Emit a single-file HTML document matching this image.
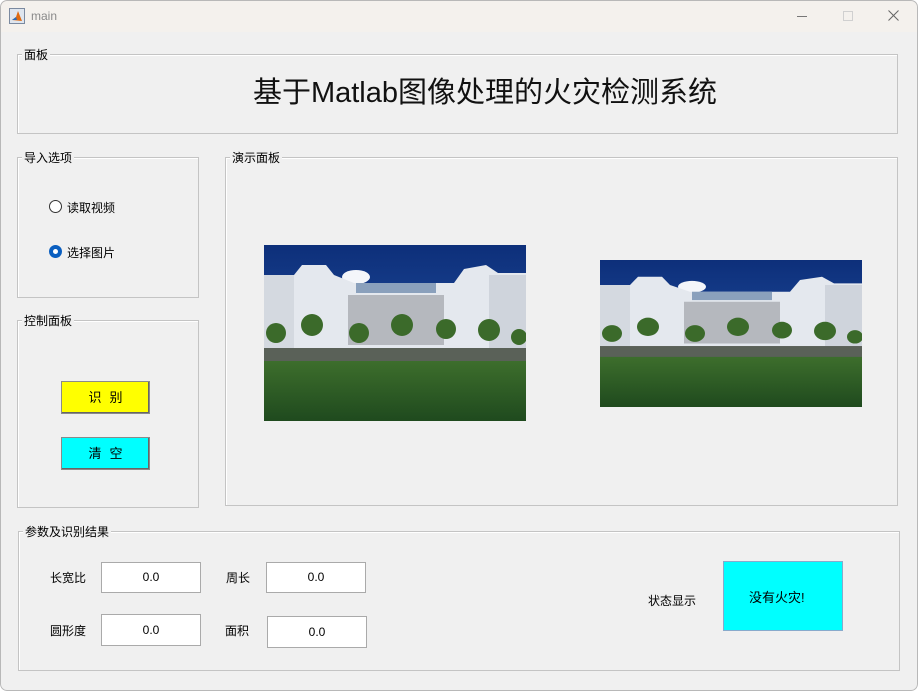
<!DOCTYPE html>
<html><head><meta charset="utf-8"><style>
body{margin:0;width:918px;height:691px;overflow:hidden;background:#fff;font-family:"Liberation Sans","Noto Sans CJK SC",sans-serif;font-size:12px;color:#000}
.win{position:absolute;left:0;top:0;width:918px;height:691px;border-radius:7px;background:#f0f0f0;overflow:hidden}
.bd{position:absolute;left:0;top:0;width:916px;height:689px;border:1px solid #b8b8b8;border-radius:7px}
.tb{position:absolute;left:0;top:0;width:918px;height:32px;background:#f4f1ed}
.a{position:absolute}
.g{position:absolute;border:1px solid #c4c4c4;box-shadow:inset 1px 1px 0 #fff}
.lb{position:absolute;background:#f0f0f0;padding:0 2px;font-size:12px;line-height:14px}
.btn{position:absolute;border:1px solid #8a8a8a;box-shadow:inset -1px -1px 0 #666;text-align:center;font-size:13px;line-height:32px;letter-spacing:8px;text-indent:8px}
.ed{position:absolute;background:#fff;border:1px solid #aaa;text-align:center;font-size:12px}
</style></head><body>
<div class="win">
<div class="tb"></div>
<svg class="a" style="left:9px;top:8px" width="16" height="16"><rect x="0.5" y="0.5" width="15" height="15" fill="#dfe6ef" stroke="#7b8aa0"/><path d="M3 12 L7 9 L9 3 L13 13 Z" fill="#e06a10"/><path d="M3 12 L7 9 L8 12Z" fill="#2a6bb8"/></svg>
<div class="a" style="left:31px;top:9px;color:#8a8a8a;font-size:12px">main</div>
<div class="a" style="left:797px;top:16px;width:10px;height:1px;background:#777"></div>
<div class="a" style="left:843px;top:11px;width:8px;height:8px;border:1px solid #d0d0d0"></div>
<svg class="a" style="left:888px;top:10px" width="11" height="11"><path d="M0.5 0.5 L10.5 10.5 M10.5 0.5 L0.5 10.5" stroke="#666" stroke-width="1"/></svg>

<div class="g" style="left:17px;top:54px;width:879px;height:78px"></div>
<div class="lb" style="left:22px;top:48px">面板</div>
<div class="a" style="left:0;width:970px;top:75px;text-align:center;font-size:29px;line-height:36px;color:#111">基于Matlab图像处理的火灾检测系统</div>

<div class="g" style="left:17px;top:157px;width:180px;height:139px"></div>
<div class="lb" style="left:22px;top:151px">导入选项</div>
<div class="a" style="left:49px;top:200px;width:11px;height:11px;border:1px solid #333;border-radius:50%;background:#fff"></div>
<div class="a" style="left:67px;top:199px">读取视频</div>
<div class="a" style="left:49px;top:245px;width:11px;height:11px;border:1px solid #0a5fc0;border-radius:50%;background:#0a5fc0"></div>
<div class="a" style="left:53px;top:249px;width:5px;height:5px;border-radius:50%;background:#fff"></div>
<div class="a" style="left:67px;top:244px">选择图片</div>

<div class="g" style="left:17px;top:320px;width:180px;height:186px"></div>
<div class="lb" style="left:22px;top:314px">控制面板</div>
<div class="btn" style="left:61px;top:381px;width:87px;height:31px;background:#ffff00;line-height:31px">识别</div>
<div class="btn" style="left:61px;top:437px;width:87px;height:31px;background:#00ffff;line-height:31px">清空</div>

<div class="g" style="left:225px;top:157px;width:671px;height:347px"></div>
<div class="lb" style="left:230px;top:151px">演示面板</div>

<svg class="a" style="left:264px;top:245px" width="262" height="176" viewBox="0 0 262 176" preserveAspectRatio="none">
<defs><linearGradient id="sk" x1="0" y1="0" x2="0" y2="1"><stop offset="0" stop-color="#0d2f7a"/><stop offset="1" stop-color="#2a5db0"/></linearGradient>
<linearGradient id="gr" x1="0" y1="0" x2="0" y2="1"><stop offset="0" stop-color="#3d6e2c"/><stop offset="1" stop-color="#1f4a1e"/></linearGradient></defs>
<rect width="262" height="176" fill="url(#sk)"/>
<ellipse cx="92" cy="32" rx="14" ry="7" fill="#f4f6fa"/>
<path d="M0 30 L30 30 L38 20 L62 20 L70 30 L90 38 L190 38 L200 24 L222 20 L234 28 L262 28 L262 115 L0 115Z" fill="#e4e8ee"/>
<path d="M84 50 L180 50 L180 100 L84 100Z" fill="#b5b8be"/>
<rect x="92" y="38" width="80" height="10" fill="#8aa0bc"/>
<path d="M0 30 L30 30 L30 110 L0 110Z" fill="#d4d9e0"/>
<path d="M225 30 L262 30 L262 110 L225 110Z" fill="#cfd4dc"/>
<g fill="#3b6a2a"><circle cx="12" cy="88" r="10"/><circle cx="48" cy="80" r="11"/><circle cx="95" cy="88" r="10"/><circle cx="138" cy="80" r="11"/><circle cx="182" cy="84" r="10"/><circle cx="225" cy="85" r="11"/><circle cx="255" cy="92" r="8"/></g>
<rect x="0" y="103" width="262" height="14" fill="#5a6158"/>
<rect x="0" y="116" width="262" height="60" fill="url(#gr)"/>
</svg>
<svg class="a" style="left:600px;top:260px" width="262" height="147" viewBox="0 0 262 176" preserveAspectRatio="none">
<rect width="262" height="176" fill="url(#sk)"/>
<ellipse cx="92" cy="32" rx="14" ry="7" fill="#f4f6fa"/>
<path d="M0 30 L30 30 L38 20 L62 20 L70 30 L90 38 L190 38 L200 24 L222 20 L234 28 L262 28 L262 115 L0 115Z" fill="#e4e8ee"/>
<path d="M84 50 L180 50 L180 100 L84 100Z" fill="#b5b8be"/>
<rect x="92" y="38" width="80" height="10" fill="#8aa0bc"/>
<path d="M0 30 L30 30 L30 110 L0 110Z" fill="#d4d9e0"/>
<path d="M225 30 L262 30 L262 110 L225 110Z" fill="#cfd4dc"/>
<g fill="#3b6a2a"><circle cx="12" cy="88" r="10"/><circle cx="48" cy="80" r="11"/><circle cx="95" cy="88" r="10"/><circle cx="138" cy="80" r="11"/><circle cx="182" cy="84" r="10"/><circle cx="225" cy="85" r="11"/><circle cx="255" cy="92" r="8"/></g>
<rect x="0" y="103" width="262" height="14" fill="#5a6158"/>
<rect x="0" y="116" width="262" height="60" fill="url(#gr)"/>
</svg>

<div class="g" style="left:18px;top:531px;width:880px;height:138px"></div>
<div class="lb" style="left:23px;top:525px">参数及识别结果</div>
<div class="a" style="left:50px;top:569px">长宽比</div>
<div class="a" style="left:50px;top:622px">圆形度</div>
<div class="a" style="left:226px;top:569px">周长</div>
<div class="a" style="left:225px;top:622px">面积</div>
<div class="a" style="left:648px;top:592px">状态显示</div>
<div class="ed" style="left:101px;top:562px;width:98px;height:29px;line-height:29px">0.0</div>
<div class="ed" style="left:101px;top:614px;width:98px;height:30px;line-height:30px">0.0</div>
<div class="ed" style="left:266px;top:562px;width:98px;height:29px;line-height:29px">0.0</div>
<div class="ed" style="left:267px;top:616px;width:98px;height:30px;line-height:30px">0.0</div>
<div class="a" style="left:723px;top:561px;width:118px;height:68px;background:#00ffff;border:1px solid #8ac"></div>
<div class="a" style="left:749px;top:587px;font-size:13px">没有火灾!</div>
<div class="bd"></div>
</div>
</body></html>
